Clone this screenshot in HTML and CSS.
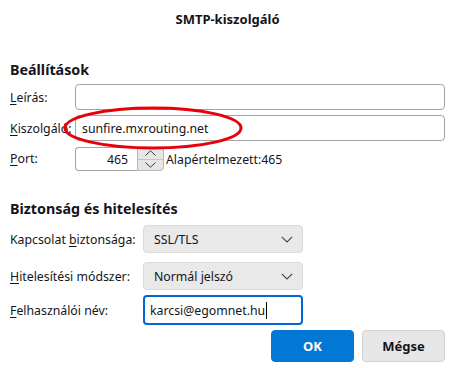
FILE: index.html
```html
<!DOCTYPE html>
<html lang="hu">
<head>
    <meta charset="UTF-8">
    <meta name="viewport" content="width=device-width, initial-scale=1.0">
    <title>SMTP-kiszolgáló</title>
    <link rel="stylesheet" href="styles.css">
</head>
<body>
    <!-- SMTP server dialog -->
    <div class="dialog">
        <h1 class="title">SMTP-kiszolgáló</h1>

        <!-- Server settings -->
        <section class="group">
            <h2 class="group-title">Beállítások</h2>
            <div class="rows rows-server">
                <label class="row-label" for="desc"><u>L</u>eírás:</label>
                <input class="text-field" type="text" id="desc">

                <label class="row-label" for="host"><u>K</u>iszolgáló:</label>
                <input class="text-field" type="text" id="host" value="sunfire.mxrouting.net">

                <label class="row-label" for="port"><u>P</u>ort:</label>
                <div class="port-line">
                    <input class="text-field port-field" type="text" id="port" value="465">
                    <div class="spinner">
                        <span class="spin-btn">
                            <svg width="11" height="6" viewBox="0 0 11 6"><path d="M0.5 5.5 L5.5 0.8 L10.5 5.5" fill="none" stroke="#3a3a3a" stroke-width="1"/></svg>
                        </span>
                        <span class="spin-btn">
                            <svg width="11" height="6" viewBox="0 0 11 6"><path d="M0.5 0.5 L5.5 5.2 L10.5 0.5" fill="none" stroke="#3a3a3a" stroke-width="1"/></svg>
                        </span>
                    </div>
                    <span class="port-default">Alapértelmezett:465</span>
                </div>
            </div>
        </section>

        <!-- Security and authentication -->
        <section class="group group-security">
            <h2 class="group-title">Biztonság és hitelesítés</h2>
            <div class="rows rows-security">
                <label class="row-label">Kapcsolat <u>b</u>iztonsága:</label>
                <div class="select-box">
                    <span>SSL/TLS</span>
                    <svg width="12" height="7" viewBox="0 0 12 7"><path d="M0.8 0.8 L6 6 L11.2 0.8" fill="none" stroke="#444" stroke-width="1.1"/></svg>
                </div>

                <label class="row-label shift"><u>H</u>itelesítési módszer:</label>
                <div class="select-box shift">
                    <span>Normál jelszó</span>
                    <svg width="12" height="7" viewBox="0 0 12 7"><path d="M0.8 0.8 L6 6 L11.2 0.8" fill="none" stroke="#444" stroke-width="1.1"/></svg>
                </div>

                <label class="row-label" for="user"><u>F</u>elhasználói név:</label>
                <div class="text-field focused">karcsi@egomnet.hu<span class="caret"></span></div>
            </div>
        </section>

        <div class="actions">
            <button class="btn btn-primary">OK</button>
            <button class="btn">Mégse</button>
        </div>

        <!-- red hand-drawn mark around the server name -->
        <svg class="mark" width="182" height="46" viewBox="0 0 182 46">
            <ellipse cx="90" cy="22" rx="88" ry="20" fill="none" stroke="#e8000b" stroke-width="3"/>
        </svg>
    </div>
</body>
</html>
```

FILE: styles.css
```css
/* SMTP server dialog */
body {
    margin: 0;
    background-color: #ffffff;
    font-family: "Noto Sans", "Open Sans", sans-serif;
    font-size: 12.3px;
    color: #15141a;
}
.dialog {
    position: relative;
    width: 452px;
    height: 368px;
    padding: 0 7px 0 10px;
    box-sizing: border-box;
}
.title {
    margin: 0;
    height: 38px;
    line-height: 38px;
    font-size: 13px;
    font-weight: bold;
    text-align: center;
}
.group-title {
    margin: 0;
    font-size: 14.3px;
    font-weight: bold;
    line-height: 20px;
}
.group {
    padding-top: 22px;
}
.group-title + .rows {
    margin-top: 4px;
}
.rows {
    display: grid;
    align-items: center;
}
.rows-server {
    grid-template-columns: 65px 1fr;
    row-gap: 5px;
}
.rows-security {
    grid-template-columns: 133px 160px;
    row-gap: 7px;
}
.group-security {
    padding-top: 28px;
}
.group-security .group-title + .rows {
    margin-top: 6px;
}
.shift {
    margin-top: 2px;
    margin-bottom: -2px;
}
.row-label {
    white-space: nowrap;
}
.row-label u {
    text-underline-offset: 2px;
}
.text-field {
    height: 26px;
    padding: 0 6px;
    box-sizing: border-box;
    border: 1px solid #a4a4a4;
    border-radius: 4px;
    font: inherit;
    color: inherit;
    background: #ffffff;
    outline: none;
}
.port-line {
    display: flex;
    align-items: center;
    padding-top: 1px;
}
.port-field {
    width: 62px;
    height: 24px;
    padding-right: 9px;
    text-align: right;
    border-radius: 4px 0 0 4px;
    border-right: none;
}
.spinner {
    display: flex;
    flex-direction: column;
    width: 27px;
    height: 24px;
    border: 1px solid #b8b8b8;
    border-radius: 0 4px 4px 0;
    box-sizing: border-box;
    background: #e6e6e6;
}
.spin-btn {
    flex: 1;
    display: flex;
    align-items: center;
    justify-content: center;
}
.spin-btn + .spin-btn {
    border-top: 1px solid #c4c4c4;
}
.port-default {
    margin-left: 2px;
}
.select-box {
    display: flex;
    align-items: center;
    justify-content: space-between;
    height: 28px;
    padding: 0 9px 0 10px;
    box-sizing: border-box;
    background: #e9e9e9;
    border: 1px solid #dadada;
    border-radius: 4px;
}
.focused {
    display: flex;
    align-items: center;
    height: 30px;
    border: 2px solid #0067d6;
    padding: 0 5px;
}
.caret {
    display: inline-block;
    width: 1px;
    height: 17px;
    margin-left: 1px;
    background: #000000;
}
.actions {
    display: flex;
    justify-content: flex-end;
    gap: 8px;
    margin-top: 5px;
}
.btn {
    width: 83px;
    height: 32px;
    border: 1px solid #d2d2d2;
    border-radius: 4px;
    background: #e7e7e7;
    font: inherit;
    font-size: 13px;
    font-weight: bold;
    color: #15141a;
}
.btn-primary {
    background: #0078d4;
    border-color: #0078d4;
    color: #ffffff;
}
.mark {
    position: absolute;
    left: 63px;
    top: 106px;
}
```
